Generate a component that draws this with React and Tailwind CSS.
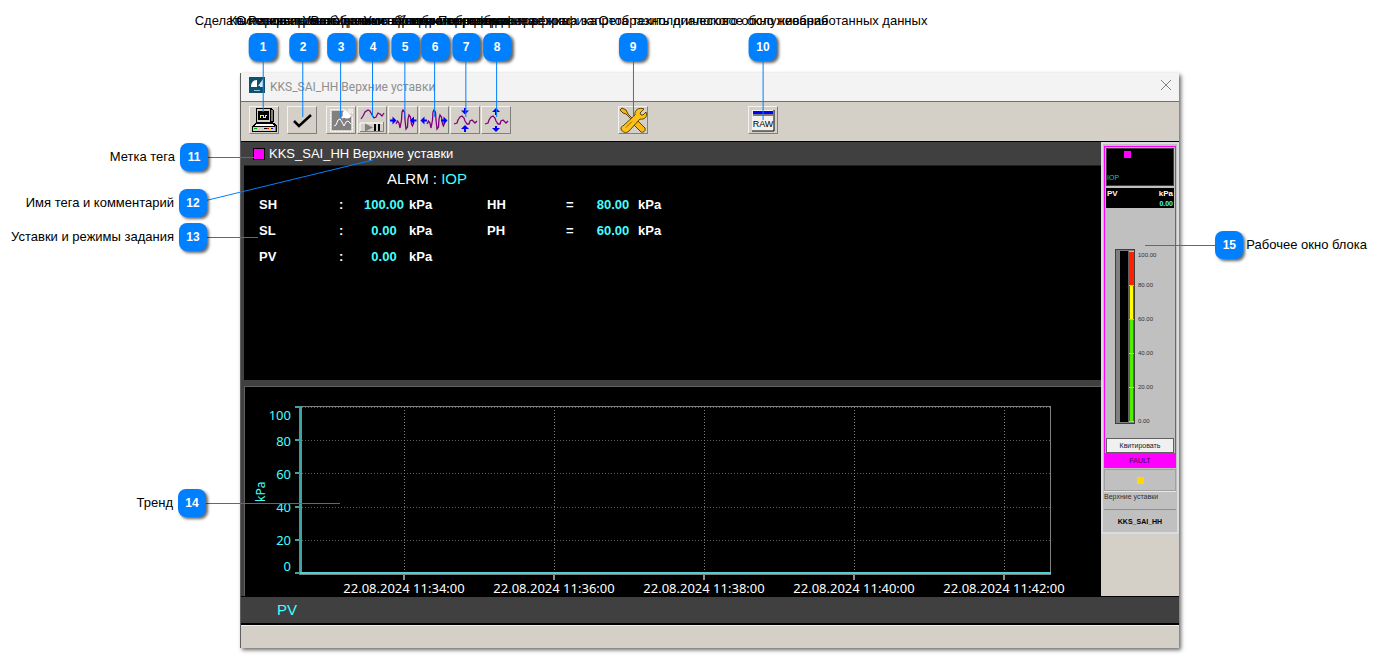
import { useState } from "react";
import clsx from "clsx";

const topCallouts = [
  { n: 1, pos: "left-[263px]", line: "h-[51px]", text: "Сделать копию экрана" },
  { n: 2, pos: "left-[303px]", line: "h-14", text: "Квитировать сообщение" },
  { n: 3, pos: "left-[341px]", line: "h-14", text: "Резервировать данные тренда" },
  { n: 4, pos: "left-[373px]", line: "h-14", text: "Остановить/Возобновить обновление тренда" },
  { n: 5, pos: "left-[405px]", line: "h-14", text: "Уменьшить отображение графика" },
  { n: 6, pos: "left-[435px]", line: "h-14", text: "Увеличить отображение графика" },
  { n: 7, pos: "left-[466px]", line: "h-14", text: "Уменьшить отображение графика" },
  { n: 8, pos: "left-[497px]", line: "h-14", text: "Увеличить отображение графика" },
  { n: 9, pos: "left-[633px]", line: "h-14", text: "Переключение режима запрета технологического обслуживания" },
  { n: 10, pos: "left-[763px]", line: "h-[59px]", text: "Отобразить диалоговое окно необработанных данных" },
];

const sideCallouts = [
  { n: 11, pos: "left-0 w-[208px] top-[143px]", text: "Метка тега" },
  { n: 12, pos: "left-0 w-[207px] top-[189px]", text: "Имя тега и комментарий" },
  { n: 13, pos: "left-0 w-[207px] top-[223px]", text: "Уставки и режимы задания" },
  { n: 14, pos: "left-0 w-[206px] top-[489px]", text: "Тренд" },
];

const settings = [
  ["SH", "100.00", "HH", "80.00"],
  ["SL", "0.00", "PH", "60.00"],
  ["PV", "0.00", null, null],
];

const yTicks = [
  { v: 100, y: 20, ty: 33 },
  { v: 80, y: 53, ty: 59 },
  { v: 60, y: 86, ty: 92 },
  { v: 40, y: 120, ty: 125 },
  { v: 20, y: 153, ty: 158 },
  { v: 0, y: 186, ty: 184 },
];

const xTicks = [
  { x: 159, t: "22.08.2024 11:34:00" },
  { x: 309, t: "22.08.2024 11:36:00" },
  { x: 459, t: "22.08.2024 11:38:00" },
  { x: 609, t: "22.08.2024 11:40:00" },
  { x: 759, t: "22.08.2024 11:42:00" },
];

const gaugeTicks = [
  { v: "100.00", y: 2, ty: 8 },
  { v: "80.00", y: 36, ty: 38 },
  { v: "60.00", y: 70, ty: 72 },
  { v: "40.00", y: 104, ty: 106 },
  { v: "20.00", y: 138, ty: 140 },
  { v: "0.00", y: 172, ty: 174 },
];

function Badge({ n }) {
  return (
    <span className="flex size-7 shrink-0 items-center justify-center rounded-lg bg-[#0080ff] text-xs leading-none font-bold text-white shadow-[2px_2px_3px_rgba(0,0,0,0.6)]">
      {n}
    </span>
  );
}

function ToolButton({ label, className, children, onClick }) {
  return (
    <button
      type="button"
      aria-label={label}
      onClick={onClick}
      className={clsx(
        "h-7 w-[30px] shrink-0 border border-t-[#f4f2ee] border-l-[#f4f2ee] border-r-[#808080] border-b-[#808080] bg-[#d4d0c8]",
        className
      )}
    >
      <svg viewBox="1 1 28 26" className="h-[26px] w-7" fill="none">
        {children}
      </svg>
    </button>
  );
}

function PcIcon() {
  return (
    <g shapeRendering="crispEdges">
      <path d="M7 2h15l3 2v11l-2 2H7z" fill="#000" />
      <path d="M8 3h13v13H8z" fill="#d4d0c8" />
      <path d="M22 4h2v11h-2z" fill="#808080" />
      <path d="M9 5h11v9H9z" fill="#000" />
      <path d="M11 12V9h3v2h2V9h2" stroke="#ffff00" strokeWidth="1" />
      <path d="M6 17h19l3 3v6H3v-6z" fill="#000" />
      <path d="M7 18h17l1 2H5z" fill="#fff" />
      <path d="M4 21h22v4H4z" fill="#d4d0c8" />
      <path d="M26 20h1v5h-1z" fill="#808080" />
      <path d="M5 22h3v1H5z" fill="#00a000" />
      <path d="M15 22h3v1h-3z" fill="#000" />
      <path d="M18 22h2v1h-2z" fill="#f00" />
      <path d="M20 22h2v1h-2z" fill="#ff0" />
      <path d="M22 22h2v1h-2z" fill="#00f" />
    </g>
  );
}

function FreezeIcon() {
  return (
    <g>
      <rect x="4.500" y="3.500" width="22" height="22" stroke="#fff" strokeDasharray="2 1" />
      <path d="M6 5h19v19H6z" fill="#808080" />
      <path d="M8 20l2-1 2-5 2-1 2 3 2 4 2-4 2-1 3 3" stroke="#fff" />
      <path d="M16 12l2-2" stroke="#fff" strokeWidth="2" />
      <circle cx="21" cy="8" r="4.500" fill="#fff" />
      <path d="M20 3l7 7" stroke="#d4d0c8" strokeWidth="2" />
      <circle cx="24" cy="5" r="2.500" fill="#eceae6" />
    </g>
  );
}

function PauseIcon() {
  return (
    <g>
      <path d="M4 13l2-3 2-4 3-2 2 1 2 4 2 3 2-1 2-4 2 1 2 2 2-3" stroke="#800080" strokeWidth="1.300" />
      <path d="M3 26V17h23" stroke="#fff" />
      <path d="M26.500 16v9.500H3" stroke="#808080" />
      <path d="M8 17.500v8l8-4z" fill="#808080" />
      <path d="M17 18h2v7h-2zM21 18h2v7h-2z" fill="#000" />
    </g>
  );
}

function TimeWave({ outward }) {
  return (
    <g>
      <path d="M8 18l1.500-3 1.500 2 1 5 1.500-8 .5-8 1-2 1.500 2 .5 8 1 9 1.500-2 .5-8 1-4 1.500 2 1 7 1 2 1.500-4" stroke="#800080" strokeWidth="1.300" />
      {outward ? (
        <path d="M1.500 14.500l4-4v3H8v2H5.500v3zM28.500 14.500l-4-4v3H22v2h2.500v3z" fill="#00f" />
      ) : (
        <path d="M8.500 14.500l-4-4v3H2v2h2.500v3zM22 14.500l4-4v3h2.500v2H26v3z" fill="#00f" />
      )}
    </g>
  );
}

function ValueWave({ outward }) {
  return (
    <g>
      <path d="M4 18l3-1 1-3 2-3 2-1 2 2 1 3 2 3 2 0 1-3 2-1 2 2 1 1 2-2" stroke="#800080" strokeWidth="1.300" />
      {outward ? (
        <path d="M15 2l4 4h-3v3h-2V6h-3zM15 26l-4-4h3v-2h2v2h3z" fill="#00f" />
      ) : (
        <path d="M15 8.500l-4-4h3V2h2v2.500h3zM15 19l4 4h-3v3h-2v-3h-3z" fill="#00f" />
      )}
    </g>
  );
}

function ToolsIcon() {
  return (
    <g stroke="#5a4300" strokeWidth="1" strokeLinejoin="round">
      <path d="M4 2l4 2 2 4 8 8 2-1 7 7c1 3-2 5-4 4l-7-7v-3L8 8 5 7 2 4z" fill="#fbb917" />
      <path d="M26 3l-4 4 1 2 2 0 3-3c2 5-2 8-6 7L11 25c-3 3-7 1-8-2 0-2 1-3 2-3L17 9c-1-5 4-8 9-6z" fill="#ffc21a" />
      <path d="M8 21.500l6-6" stroke="#8a6400" />
    </g>
  );
}

function Toolbar() {
  const [paused, setPaused] = useState(false);
  return (
    <div className="flex h-10 items-start border-t border-[#6f6f6f] bg-[#d4d0c8] pt-1 pl-2">
      <ToolButton label="Сделать копию экрана"><PcIcon /></ToolButton>
      <ToolButton label="Квитировать" className="ml-2">
        <path d="M7 15l5 5L24 9" stroke="#000" strokeWidth="2.500" />
      </ToolButton>
      <div className="ml-[9px] flex gap-px">
        <ToolButton label="Резервировать данные тренда"><FreezeIcon /></ToolButton>
        <ToolButton label="Остановить/Возобновить" onClick={() => setPaused(!paused)}><PauseIcon /></ToolButton>
        <ToolButton label="Сжать по времени"><TimeWave /></ToolButton>
        <ToolButton label="Растянуть по времени"><TimeWave outward /></ToolButton>
        <ToolButton label="Сжать по значению"><ValueWave /></ToolButton>
        <ToolButton label="Растянуть по значению"><ValueWave outward /></ToolButton>
      </div>
      <ToolButton label="Техобслуживание" className="ml-[107px]"><ToolsIcon /></ToolButton>
      <ToolButton label="Необработанные данные" className="ml-[100px]">
        <path d="M4 4h22v21H4z" fill="#f4f2ee" />
        <path d="M26 4v21H4" stroke="#000" />
        <path d="M5 5h20v3H5z" fill="#00f" />
        <path d="M5 9h20" stroke="#000" />
        <text x="15" y="21" textAnchor="middle" fill="#000" className="font-['Liberation_Sans'] text-[9px]">
          RAW
        </text>
      </ToolButton>
    </div>
  );
}

function Trend() {
  return (
    <svg className="block h-[209px] w-full bg-black font-['Noto_Sans',sans-serif] text-[13px]" role="img" aria-label="Тренд">
      <g shapeRendering="crispEdges">
        <path d="M55 19.500H805.500V187" stroke="#808080" fill="none" />
        {yTicks.map((t) => (
          <g key={t.v}>
            <path d={`M57 ${t.y + 0.5}H805`} stroke="#606060" strokeDasharray="1 2" />
            <path d={`M50 ${t.y}H57`} stroke="#3fa3a3" strokeWidth="2" />
          </g>
        ))}
        {xTicks.map((t) => (
          <g key={t.t}>
            <path d={`M${t.x + 0.5} 20V186`} stroke="#808080" strokeDasharray="1 2" />
            <path d={`M${t.x} 187v6`} stroke="#909090" strokeWidth="2" />
          </g>
        ))}
        <path d="M54.500 19V188" stroke="#808080" />
        <path d="M56 19V187" stroke="#3fa3a3" strokeWidth="2" />
        <path d="M55 187.500H806" stroke="#808080" />
        <path d="M55 186H806" stroke="#4fd0d0" strokeWidth="2" />
      </g>
      <g fill="#4ff" textAnchor="end">
        {yTicks.map((t) => (
          <text key={t.v} x="46" y={t.ty}>{t.v}</text>
        ))}
      </g>
      <text transform="translate(20 115) rotate(-90)" fill="#4ff" className="text-xs">kPa</text>
      <g fill="#fff" textAnchor="middle">
        {xTicks.map((t) => (
          <text key={t.t} x={t.x} y="206">{t.t}</text>
        ))}
      </g>
    </svg>
  );
}

function Faceplate() {
  return (
    <aside className="w-[78px] shrink-0 bg-[#d4d0c8] text-[7px] leading-none">
      <div className="border-2 border-[#d9dde2] bg-[#c0c0c0] px-px pt-0.5">
        <div className="border border-[#ff00ff] px-px pt-px">
          <div className="relative flex h-[38px] items-end border border-[#404040] bg-black pb-1">
            <span className="absolute top-0.5 left-[17px] size-[7px] bg-[#ff00ff]" />
            <span className="text-[#0cc]">IOP</span>
          </div>
          <div className="mt-0.5 h-5 bg-black px-px pt-0.5 text-[8px] leading-none font-bold text-white">
            <div className="flex justify-between"><span>PV</span><span>kPa</span></div>
            <div className="mt-0.5 text-right text-[7px] leading-none text-[#4ff]">0.00</div>
          </div>
          <svg className="mt-[41px] block h-[177px] w-full text-[6px]" role="img" aria-label="PV 0.00 kPa">
            <rect x="9.500" y="0.500" width="19" height="174" fill="#808080" stroke="#404040" />
            <path d="M14 2h8v171h-8z" fill="#000" />
            <path d="M22 2h6v171h-6z" fill="#606060" />
            <path d="M24 2h3v34h-3z" fill="#ff2000" />
            <path d="M24 36h3v34h-3z" fill="#ff0" />
            <path d="M24 70h3v103h-3z" fill="#4ef000" />
            {gaugeTicks.map((t) => (
              <g key={t.v}>
                <path d={`M23 ${t.y + 0.5}h5`} stroke="#c0c0c0" />
                <text x="32" y={t.ty} fill="#303030">{t.v}</text>
              </g>
            ))}
          </svg>
          <button type="button" className="mt-3 block h-[15px] w-full border border-[#606060] bg-[#f0f0f0] text-center text-[#202020]">
            Квитировать
          </button>
          <div className="-mx-px flex h-[14px] items-center justify-center bg-[#ff00ff] text-[#400040]">FAULT</div>
        </div>
        <div className="mt-px flex h-[22px] items-center justify-center border border-[#a0a0a0]">
          <span className="size-[7px] bg-[#ffd800]" />
        </div>
        <div className="h-[19px] border-t border-b border-t-[#e8e8e8] border-b-[#909090] pt-px whitespace-nowrap text-[#303030]">
          Верхние уставки
        </div>
        <div className="flex h-[22px] items-center justify-center font-bold text-black">KKS_SAI_HH</div>
      </div>
    </aside>
  );
}

function TagWindow() {
  return (
    <div className="mr-[204px] ml-[240px] border-l border-[#606060] bg-[#404040] shadow-[2px_2px_4px_rgba(0,0,0,0.6)]">
      <div className="flex h-7 items-center bg-[#f3f3f3] px-2 font-[Roboto,sans-serif] text-xs text-[#8f8f8f]">
        <svg viewBox="0 0 16 16" className="mr-[5px] mb-1 size-4">
          <path d="M0 0h16v16H0z" fill="#0c526e" />
          <path d="M2 10C2 6 4 3 8 3v7z" fill="#fff" />
          <path d="M9 9l5-7v8h-3v-1z" fill="#d8e6ec" />
          <path d="M5 13h6v1H5z" fill="#9fc0cc" />
        </svg>
        <span className="grow">KKS_SAI_HH Верхние уставки</span>
        <button type="button" aria-label="Закрыть" className="mb-1">
          <svg viewBox="0 0 10 10" className="size-[10px]" stroke="#808080">
            <path d="M0 0l10 10M10 0L0 10" />
          </svg>
        </button>
      </div>

      <Toolbar />

      <div className="flex border-t border-black">
        <div className="min-w-0 grow pl-[3px]">
          <div className="flex h-6 items-center border-b border-[#202020] pl-[9px] text-[13px] text-white">
            <span className="mr-1 size-3 border border-black bg-[#ff00ff]" />
            KKS_SAI_HH Верхние уставки
          </div>
          <div className="h-[214px] bg-black pl-[15px] text-white">
            <p className="pl-32 text-[15px] leading-[26px]">
              ALRM : <span className="text-[#4ff]">IOP</span>
            </p>
            <table className="w-[456px] table-fixed text-[13px] leading-[26px] font-bold">
              <colgroup>
                <col className="w-20" />
                <col className="w-[22px]" />
                <col className="w-[46px]" />
                <col className="w-20" />
                <col className="w-[79px]" />
                <col className="w-6" />
                <col className="w-[46px]" />
                <col />
              </colgroup>
              <tbody>
                {settings.map(([name, value, name2, value2]) => (
                  <tr key={name}>
                    <td>{name}</td>
                    <td>:</td>
                    <td className="text-center text-[#4ff]">{value}</td>
                    <td className="pl-0.5">kPa</td>
                    <td>{name2}</td>
                    <td>{name2 && "="}</td>
                    <td className="text-center text-[#4ff]">{value2}</td>
                    <td className="pl-0.5">{name2 && "kPa"}</td>
                  </tr>
                ))}
              </tbody>
            </table>
          </div>
          <div className="mt-1.5 border-t border-l border-[#606060]">
            <Trend />
          </div>
        </div>
        <Faceplate />
      </div>

      <div className="flex h-[29px] items-center border-t border-b-2 border-black pl-9 text-[15px] text-[#4ff]">PV</div>
      <div className="h-[23px] border-t border-[#f0eee8] bg-[#d4d0c8]" />
    </div>
  );
}

export default function App() {
  return (
    <div className="relative min-h-screen overflow-hidden bg-white pt-[73px] pb-2 font-['Liberation_Sans',Arial,sans-serif]">
      <TagWindow />

      {topCallouts.map((c) => (
        <div key={c.n} className={clsx("absolute top-[13px] flex -translate-x-1/2 flex-col items-center", c.pos)}>
          <span className="text-[13px] leading-4 whitespace-nowrap text-black">{c.text}</span>
          <span className="mt-1"><Badge n={c.n} /></span>
          <span className={clsx("w-px bg-[#0080ff]", c.line)} />
        </div>
      ))}

      <svg className="pointer-events-none absolute top-0 left-0 h-[657px] w-[400px]" stroke="#0080ff">
        <path d="M207 157.500H257M207 237.500H258M205 503.500H340" />
        <path d="M206 200.500L373 160" />
      </svg>

      {sideCallouts.map((c) => (
        <div key={c.n} className={clsx("absolute flex items-center justify-end gap-[5px] text-[13px] whitespace-nowrap text-black", c.pos)}>
          {c.text}
          <Badge n={c.n} />
        </div>
      ))}

      <div className="absolute top-[231px] right-4 flex items-center text-[13px] whitespace-nowrap text-black">
        <span className="h-px w-[70px] bg-[#0080ff]" />
        <Badge n={15} />
        <span className="ml-[3px]">Рабочее окно блока</span>
      </div>
    </div>
  );
}
